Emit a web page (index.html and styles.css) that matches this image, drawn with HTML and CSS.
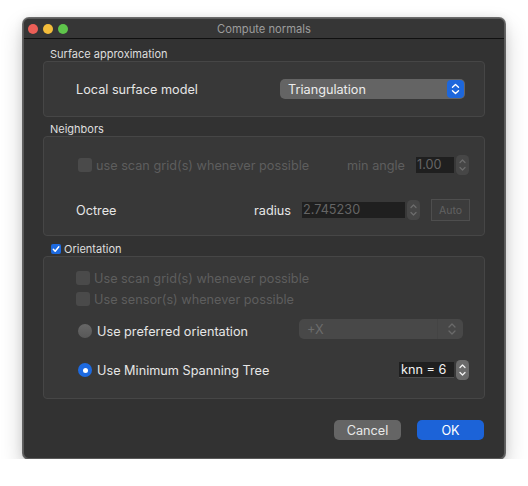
FILE: index.html
```html
<!DOCTYPE html>
<html>
<head>
<meta charset="utf-8">
<link rel="stylesheet" href="styles.css">
</head>
<body>
<div class="window">
  <div class="titlebar">
    <div class="lights">
      <span class="light red"></span>
      <span class="light yellow"></span>
      <span class="light green"></span>
    </div>
    <div class="title">Compute normals</div>
    <div></div>
  </div>
  <div class="content">
    <div class="group-label">Surface approximation</div>
    <div class="box box-surface">
      <div class="row">
        <span class="label">Local surface model</span>
        <span class="spacer"></span>
        <div class="combo">
          <span class="combo-text">Triangulation</span>
          <svg class="combo-arrow" width="17" height="18" viewBox="0 0 17 18">
            <rect x="0" y="0" width="17" height="18" rx="4" fill="#1d67dc"/>
            <path d="M5.5 7.2 L8.5 4.4 L11.5 7.2" fill="none" stroke="#fff" stroke-width="1.4" stroke-linecap="round" stroke-linejoin="round"/>
            <path d="M5.5 10.8 L8.5 13.6 L11.5 10.8" fill="none" stroke="#fff" stroke-width="1.4" stroke-linecap="round" stroke-linejoin="round"/>
          </svg>
        </div>
      </div>
    </div>

    <div class="group-label gl-neighbors">Neighbors</div>
    <div class="box box-neighbors">
      <div class="row row-grid">
        <span class="checkbox disabled cb-indent"></span>
        <span class="label dim cb-text">use scan grid(s) whenever possible</span>
        <span class="spacer"></span>
        <span class="label dim">min angle</span>
        <span class="field field-angle dim-field">1.00</span>
        <svg class="stepper" width="13" height="20" viewBox="0 0 13 20">
          <rect x="0" y="0" width="13" height="20" rx="4.5" fill="#464646"/>
          <path d="M4 7.5 L6.5 5 L9 7.5" fill="none" stroke="#6c6c6c" stroke-width="1.3" stroke-linecap="round" stroke-linejoin="round"/>
          <path d="M4 12.5 L6.5 15 L9 12.5" fill="none" stroke="#6c6c6c" stroke-width="1.3" stroke-linecap="round" stroke-linejoin="round"/>
        </svg>
      </div>
      <div class="row row-octree">
        <span class="label">Octree</span>
        <span class="spacer"></span>
        <span class="label">radius</span>
        <span class="field field-radius dim-field">2.745230</span>
        <svg class="stepper" width="13" height="20" viewBox="0 0 13 20">
          <rect x="0" y="0" width="13" height="20" rx="4.5" fill="#464646"/>
          <path d="M4 7.5 L6.5 5 L9 7.5" fill="none" stroke="#6c6c6c" stroke-width="1.3" stroke-linecap="round" stroke-linejoin="round"/>
          <path d="M4 12.5 L6.5 15 L9 12.5" fill="none" stroke="#6c6c6c" stroke-width="1.3" stroke-linecap="round" stroke-linejoin="round"/>
        </svg>
        <span class="auto-btn">Auto</span>
      </div>
    </div>

    <div class="group-label gl-orientation">
      <svg class="check-on" width="10" height="10" viewBox="0 0 10 10">
        <rect x="0" y="0" width="10" height="10" rx="2" fill="#1d6ae0"/>
        <path d="M2.3 5.2 L4.2 7.2 L7.8 2.8" fill="none" stroke="#fff" stroke-width="1.5" stroke-linecap="round" stroke-linejoin="round"/>
      </svg>
      <span>Orientation</span>
    </div>
    <div class="box box-orientation">
      <div class="row row-cb1">
        <span class="checkbox disabled"></span>
        <span class="label dim cb-text">Use scan grid(s) whenever possible</span>
      </div>
      <div class="row row-cb2">
        <span class="checkbox disabled"></span>
        <span class="label dim cb-text">Use sensor(s) whenever possible</span>
      </div>
      <div class="row row-radio1">
        <span class="radio"></span>
        <span class="label radio-text">Use preferred orientation</span>
        <span class="spacer"></span>
        <div class="combo combo-disabled">
          <span class="combo-text">+X</span>
          <span class="combo-divider"></span>
          <svg class="combo-arrow-plain" width="10" height="14" viewBox="0 0 10 14">
            <path d="M2 5 L5 2 L8 5" fill="none" stroke="#6a6a6a" stroke-width="1.3" stroke-linecap="round" stroke-linejoin="round"/>
            <path d="M2 9 L5 12 L8 9" fill="none" stroke="#6a6a6a" stroke-width="1.3" stroke-linecap="round" stroke-linejoin="round"/>
          </svg>
        </div>
      </div>
      <div class="row row-radio2">
        <span class="radio checked"></span>
        <span class="label radio-text">Use Minimum Spanning Tree</span>
        <span class="spacer"></span>
        <span class="field field-knn">knn = 6</span>
        <svg class="stepper" width="13" height="20" viewBox="0 0 13 20">
          <rect x="0" y="0" width="13" height="20" rx="4.5" fill="#6a6a6a"/>
          <path d="M4 7.5 L6.5 5 L9 7.5" fill="none" stroke="#f2f2f2" stroke-width="1.3" stroke-linecap="round" stroke-linejoin="round"/>
          <path d="M4 12.5 L6.5 15 L9 12.5" fill="none" stroke="#f2f2f2" stroke-width="1.3" stroke-linecap="round" stroke-linejoin="round"/>
        </svg>
      </div>
    </div>

    <div class="buttons">
      <span class="btn btn-cancel">Cancel</span>
      <span class="btn btn-ok">OK</span>
    </div>
  </div>
</div>
</body>
</html>
```

FILE: styles.css
```css
* { box-sizing: border-box; }
html, body { margin: 0; background: #ffffff; }
body {
  padding: 18px 0 0 23px;
  font-family: Inter, "Liberation Sans", sans-serif;
  -webkit-font-smoothing: antialiased;
}
.window {
  width: 482px;
  height: 441px;
  background: #323232;
  border: 1px solid #5a5a5a;
  border-radius: 6px;
  box-shadow: 0 0 0 1px rgba(0,0,0,0.55), 0 10px 22px rgba(0,0,0,0.22), 0 0 10px rgba(0,0,0,0.10);
  overflow: hidden;
}
.titlebar {
  height: 20px;
  background: #363636;
  border-bottom: 1px solid #101010;
  display: grid;
  grid-template-columns: 1fr auto 1fr;
  align-items: center;
}
.lights { display: flex; gap: 5px; padding-left: 4px; }
.light { width: 10px; height: 10px; border-radius: 50%; display: block; }
.red { background: #ec5f57; }
.yellow { background: #f4bd3b; }
.green { background: #5fc54b; }
.title { color: #9d9d9d; font-size: 11.2px; line-height: 20px; }

.content { padding: 8px 19px 0 19px; }
.group-label {
  color: #dedede;
  font-size: 11px;
  line-height: 14px;
  height: 14px;
  padding-left: 7px;
}
.gl-neighbors { margin-top: 5px; }
.gl-orientation {
  margin-top: 6px;
  padding-left: 8px;
  display: flex;
  align-items: center;
  gap: 3px;
}
.check-on { display: block; }
.box {
  background: #383838;
  border: 1px solid #464646;
  border-radius: 4px;
}
.box-surface { height: 56px; padding: 0 19px 0 32px; display: flex; }
.box-surface .row { flex: 1; }
.box-neighbors { height: 100px; padding: 18px 15px 0 32px; }
.box-orientation { height: 143px; padding: 13px 15px 0 32px; }

.row { display: flex; align-items: center; }
.spacer { flex: 1; }
.label { color: #e6e6e6; font-size: 12.7px; white-space: nowrap; }
.dim { color: #5e5e5e; }

.combo {
  width: 185px;
  height: 20px;
  background: #646464;
  border-radius: 5px;
  display: flex;
  align-items: center;
  padding: 0 1px 0 8px;
}
.combo-text { flex: 1; color: #ececec; font-size: 12.7px; }
.combo-arrow { display: block; }

.row-grid { height: 20px; }
.cb-indent { margin-left: 2px; }
.checkbox {
  width: 14px;
  height: 14px;
  border-radius: 3px;
  background: #4a4a4a;
  display: block;
  flex: none;
}
.cb-text { margin-left: 4px; }
.field {
  height: 16px;
  background: #1f1f1f;
  font-size: 12.7px;
  line-height: 16px;
  padding-left: 1px;
  white-space: nowrap;
}
.dim-field { color: #656565; }
.field-angle { width: 38px; margin-left: 11px; }
.stepper { display: block; margin-left: 2px; flex: none; }
.row-octree { height: 22px; margin-top: 24px; margin-right: -1px; }
.field-radius { width: 103px; margin-left: 11px; }
.auto-btn {
  width: 39px;
  height: 22px;
  margin-left: 11px;
  border: 1px solid #4e4e4e;
  background: #3c3c3c;
  color: #626262;
  font-size: 10.5px;
  display: flex;
  align-items: center;
  justify-content: center;
}

.row-cb1 { height: 16px; }
.row-cb2 { height: 16px; margin-top: 5px; }
.row-radio1 { height: 24px; margin-top: 12px; align-items: center; }
.radio {
  width: 14px;
  height: 14px;
  border-radius: 50%;
  background: linear-gradient(#676767, #585858);
  margin-left: 2px;
  flex: none;
  display: block;
  position: relative;
}
.radio.checked { background: #1d6ae0; }
.radio.checked::after {
  content: "";
  position: absolute;
  left: 4.5px;
  top: 4.5px;
  width: 5px;
  height: 5px;
  border-radius: 50%;
  background: #fff;
}
.radio-text { margin-left: 5px; }
.combo-disabled {
  width: 164px;
  align-self: flex-start;
  background: #484848;
  margin-right: 6px;
  padding: 0 0 0 8px;
}
.combo-disabled .combo-text { color: #6c6c6c; }
.combo-divider { width: 1px; height: 20px; background: #444444; }
.combo-arrow-plain { display: block; margin: 0 6px 0 9px; }

.row-radio2 { height: 20px; margin-top: 17px; }
.field-knn {
  width: 55px;
  color: #f2f2f2;
  padding-left: 2px;
  border-bottom: 1px solid #4c4c4c;
  line-height: 15px;
}

.buttons {
  display: flex;
  justify-content: flex-end;
  gap: 16px;
  margin-top: 21px;
  margin-right: 1px;
}
.btn {
  width: 67px;
  height: 20px;
  border-radius: 5px;
  font-size: 12.7px;
  display: flex;
  align-items: center;
  justify-content: center;
}
.btn-cancel { background: #656565; color: #e8e8e8; }
.btn-ok { background: #1c63d8; color: #ffffff; }
```
